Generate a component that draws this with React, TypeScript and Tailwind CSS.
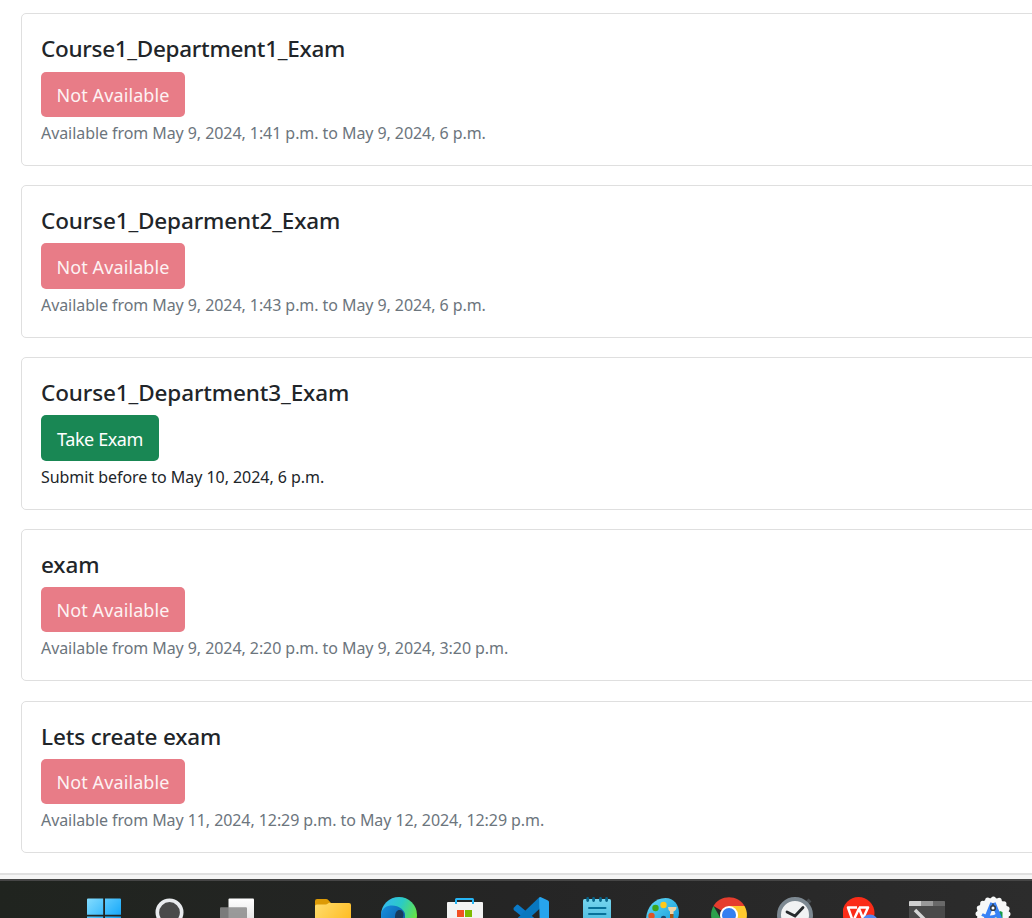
import type { ReactNode } from "react";

type Exam = {
  title: string;
  available: boolean;
  note: string;
  cardClass: string;
  titleClass: string;
  buttonClass: string;
  noteClass: string;
};

const exams: Exam[] = [
  {
    title: "Course1_Department1_Exam",
    available: false,
    note: "Available from May 9, 2024, 1:41 p.m. to May 9, 2024, 6 p.m.",
    cardClass: "h-[153px]",
    titleClass: "tracking-[-0.29px]",
    buttonClass: "mt-[9px] h-[45px]",
    noteClass: "tracking-[-0.07px]",
  },
  {
    title: "Course1_Deparment2_Exam",
    available: false,
    note: "Available from May 9, 2024, 1:43 p.m. to May 9, 2024, 6 p.m.",
    cardClass: "h-[153px]",
    titleClass: "tracking-[-0.14px]",
    buttonClass: "mt-[8px] h-[46px]",
    noteClass: "tracking-[-0.07px]",
  },
  {
    title: "Course1_Department3_Exam",
    available: true,
    note: "Submit before to May 10, 2024, 6 p.m.",
    cardClass: "h-[153px]",
    titleClass: "tracking-[-0.12px]",
    buttonClass: "mt-[8px] h-[46px]",
    noteClass: "tracking-[-0.05px]",
  },
  {
    title: "exam",
    available: false,
    note: "Available from May 9, 2024, 2:20 p.m. to May 9, 2024, 3:20 p.m.",
    cardClass: "mb-[1px] h-[152px]",
    titleClass: "tracking-[-0.1px]",
    buttonClass: "mt-[8px] h-[45px]",
    noteClass: "tracking-[-0.07px]",
  },
  {
    title: "Lets create exam",
    available: false,
    note: "Available from May 11, 2024, 12:29 p.m. to May 12, 2024, 12:29 p.m.",
    cardClass: "h-[152px]",
    titleClass: "tracking-[-0.14px]",
    buttonClass: "mt-[8px] h-[45px]",
    noteClass: "tracking-[-0.075px]",
  },
];

function ExamCard({ exam }: { exam: Exam }) {
  return (
    <article className={`flex w-[1100px] shrink-0 flex-col items-start rounded-[5px] border border-[#dfdfdf] bg-white px-[19px] pt-[20px] ${exam.cardClass}`}>
      <h2 className={`h-[29px] whitespace-nowrap text-[22.5px] leading-[29px] font-medium text-[#212529] ${exam.titleClass}`}>
        {exam.title}
      </h2>
      {exam.available ? (
        <button className={`w-[118px] rounded-[5px] bg-[#198754] pt-[1px] text-[18px] leading-none tracking-[-0.4px] whitespace-nowrap text-white ${exam.buttonClass}`}>
          Take Exam
        </button>
      ) : (
        <button disabled className={`w-[144px] rounded-[5px] bg-[#e87c87] pt-[1px] text-[18px] leading-none tracking-[0.1px] whitespace-nowrap text-[#fdf2f3] ${exam.buttonClass}`}>
          Not Available
        </button>
      )}
      <p className={`mt-[4px] text-[16px] leading-[24px] whitespace-nowrap ${exam.available ? "text-[#212529]" : "text-[#6c757d]"} ${exam.noteClass}`}>
        {exam.note}
      </p>
    </article>
  );
}

function Icon({ children }: { children: ReactNode }) {
  return (
    <svg className="size-9 shrink-0" viewBox="0 0 36 36" fill="none">
      {children}
    </svg>
  );
}

function Taskbar() {
  return (
    <footer className="h-[39px] shrink-0 overflow-hidden border-t-2 border-[#464646] bg-linear-to-r from-[#20241f] via-[#252525] to-[#2c2c2c]">
      <div className="flex pt-[15px] pl-[86px]">
        <div className="flex w-[229px] gap-[30px]">
          <Icon>
            <defs><linearGradient id="win" x1="0" y1="0" x2="36" y2="36" gradientUnits="userSpaceOnUse"><stop stopColor="#8be0ff" /><stop offset=".65" stopColor="#26b0fb" /><stop offset="1" stopColor="#0883d8" /></linearGradient></defs>
            <path fill="url(#win)" d="M2 2.5h15.2v16.2H1V3.5Q1 2.500 2 2.500M19 2.500h15q1 0 1 1v15.200H19zM1 20.500h16.200V36H1zM19 20.500h16V36H19z" />
          </Icon>
          <Icon>
            <circle cx="17.500" cy="16.500" r="12.200" fill="#4a4a4a" stroke="#e9ebee" strokeWidth="3.600" />
          </Icon>
          <svg className="h-9 w-[38px] shrink-0" viewBox="0 0 38 36">
            <defs><linearGradient id="tv" x1="0" y1="0" x2="0" y2="1"><stop stopColor="#fff" /><stop offset="1" stopColor="#ddd" /></linearGradient></defs>
            <rect x="10.500" y="2.500" width="25.500" height="27" rx="1" fill="url(#tv)" />
            <rect x="2" y="11.300" width="27" height="24" rx="1" fill="#8b8b8b" fillOpacity=".85" />
          </svg>
        </div>
        <div className="flex gap-[30px]">
          <Icon>
            <defs><linearGradient id="fold" x1="0" y1="6" x2="36" y2="34" gradientUnits="userSpaceOnUse"><stop stopColor="#ffdd70" /><stop offset="1" stopColor="#ffb716" /></linearGradient></defs>
            <path fill="#dc9a06" d="M0 5q0-2 2-2h9q1.500 0 2.500 1.200L16 7l-4 5H0z" />
            <path fill="url(#fold)" d="M0 10q0-1.500 2-1.500h8.500q1.500 0 2.500-1T15.500 7H34q2 0 2 2v24H0z" />
          </Icon>
          <Icon>
            <defs>
              <linearGradient id="edgeTop" x1="1" y1="4" x2="36" y2="20" gradientUnits="userSpaceOnUse"><stop stopColor="#35b8f4" /><stop offset=".5" stopColor="#2bcbc5" /><stop offset="1" stopColor="#69e53e" /></linearGradient>
              <linearGradient id="edgeBlue" x1="0" y1="10" x2="25" y2="28" gradientUnits="userSpaceOnUse"><stop stopColor="#1690df" /><stop offset="1" stopColor="#0c59a4" /></linearGradient>
            </defs>
            <circle cx="18" cy="19" r="18" fill="url(#edgeTop)" />
            <path fill="url(#edgeBlue)" d="M0 18C1 12 6 9.500 11 9.500c7 0 13 5 13 9V36H8Q0 30 0 18" />
            <path fill="#173b5c" d="M14 22c0-6 2-8 4.500-8 2.500 0 4 2 4 4.500 0 2-1 3-1 5H14z" />
          </Icon>
          <Icon>
            <path fill="#f3f3f3" d="M1 6h34q1 0 1 1v27H0V7q0-1 1-1" />
            <path stroke="#27b5f5" strokeWidth="2" d="M9 8V3.500Q9 3 9.500 3h16q.5 0 .5.500V8" />
            <path fill="#f25022" d="M10 14h7v7h-7z" /><path fill="#7fba00" d="M18 14h7v7h-7z" />
            <path fill="#00a4ef" d="M10 22h7v7h-7z" /><path fill="#ffb900" d="M18 22h7v7h-7z" />
          </Icon>
          <Icon>
            <path fill="#0b7ac8" d="m.5 12 3-3q1-.8 2 0L31 30v8L.7 14z" />
            <path fill="#0877bf" d="M.5 26 26 1.500l2 10L4.500 33z" />
            <path fill="#27a5ee" d="m26 1.500 1.500-.5 7.500 3.500q1 .5 1 1.500v26l-9 4z" />
          </Icon>
          <Icon>
            <defs><linearGradient id="note" x1="0" y1="0" x2="0" y2="1"><stop stopColor="#75d5ee" /><stop offset="1" stopColor="#42b4da" /></linearGradient></defs>
            <rect x="4" y="3" width="28" height="31" rx="1.500" fill="url(#note)" />
            <path stroke="#076489" strokeWidth="2.800" strokeLinecap="round" d="M8.700 2.500v2M14.600 2.500v2M21.500 2.500v2M27.600 2.500v2" />
            <path stroke="#087199" strokeWidth="2" strokeLinecap="round" d="M10 12h16.500M10 18h16.500" />
          </Icon>
          <Icon>
            <defs><linearGradient id="palette" x1="4" y1="2" x2="30" y2="30" gradientUnits="userSpaceOnUse"><stop stopColor="#63d8f5" /><stop offset="1" stopColor="#129bdb" /></linearGradient></defs>
            <path fill="url(#palette)" d="M1 24C1 12 9 2 20.500 2 29 2 34 9 34 17c0 8-8 17-17 17z" />
            <circle cx="18.500" cy="9" r="3.200" fill="#ffc91a" /><circle cx="10.500" cy="12" r="3.200" fill="#3ba51c" /><circle cx="6.500" cy="20" r="3.200" fill="#df5424" />
            <circle cx="18.500" cy="22.500" r="2.700" fill="#174b70" />
            <path fill="#f0d3a4" d="M23 11h8.500q0 3-3 4.500V18h-3.500v-2.500q-2-1.500-2-4.500" /><path fill="#a45712" d="M25 18h3.500v13H25z" />
          </Icon>
          <Icon>
            <path fill="#e53d2e" d="M2.500 10A18 18 0 0 1 33.500 10L18 19z" />
            <path fill="#ffca2e" d="M18 10h15.500A18 18 0 0 1 18 37l8-14z" />
            <path fill="#2da04b" d="M2.500 10 10 23l8 5v9A18 18 0 0 1 2.500 10" />
            <circle cx="18" cy="19" r="9" fill="#fff" /><circle cx="18" cy="19" r="7" fill="#347ff0" />
          </Icon>
          <Icon>
            <path stroke="#484d50" strokeWidth="4" d="m29 8 4-4" />
            <circle cx="18" cy="19" r="16" fill="#f1f2f3" stroke="#7d8992" strokeWidth="4" />
            <path stroke="#26292c" strokeWidth="2.800" strokeLinecap="round" d="m10 16 8 4 8-8.500" />
          </Icon>
          <Icon>
            <circle cx="15.500" cy="17" r="16" fill="#fb2c18" />
            <path stroke="#fff" strokeWidth="2.500" strokeLinejoin="round" d="M14 11.500H5l5 14 6-13 4 10 5-11h-9" />
            <circle cx="27" cy="26.500" r="8" fill="#5187ef" />
          </Icon>
          <Icon>
            <path fill="#4a4a4a" d="M0 6q0-1 1-1h34q1 0 1 1v28H0z" />
            <path fill="#d0d0d0" d="M0 6q0-1 1-1h11v5H0z" /><path fill="#999" d="M12 5h12v5H12z" /><path fill="#696969" d="M24 5h11q1 0 1 1v4H24z" />
            <path stroke="#d6d6d6" strokeWidth="3.500" d="m6 14 8 8-8 8" />
          </Icon>
          <Icon>
            <circle cx="18" cy="18" r="16" fill="#f7f8f8" />
            <circle cx="18" cy="18" r="15" stroke="#f7f8f8" strokeWidth="5" strokeLinecap="round" strokeDasharray="0 5.890" />
            <path fill="#169b45" d="m22 18 3-3 2.500 1v6h-6z" />
            <path stroke="#3982f5" strokeWidth="4.500" d="m17.500 7-6.500 16M18.500 7l6.500 16" />
            <path stroke="#3982f5" strokeWidth="3" d="M7 18.500q9 5 16 0" />
            <circle cx="18" cy="12" r="2.300" fill="#fff" stroke="#303c48" strokeWidth="1.600" />
            <path stroke="#303c48" strokeWidth="1.600" d="M18 7.500V10" />
          </Icon>
        </div>
      </div>
    </footer>
  );
}

export default function App() {
  return (
    <div className="flex h-[918px] w-[1032px] flex-col overflow-hidden bg-white font-['Noto_Sans','Open_Sans',sans-serif]">
      <main className="flex h-[873px] shrink-0 flex-col gap-[19px] overflow-hidden pt-[13px] pl-[21px]">
        {exams.map((exam) => <ExamCard key={exam.title} exam={exam} />)}
      </main>
      <div className="h-[6px] shrink-0 border-t-2 border-[#e0e0e0] bg-[#f5f5f5]" />
      <Taskbar />
    </div>
  );
}
